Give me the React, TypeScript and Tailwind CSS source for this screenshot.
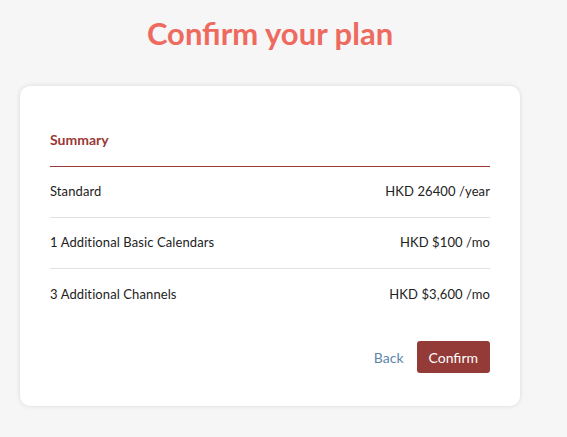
const rows = [
  { label: "Standard", price: "HKD 26400 /year" },
  { label: "1 Additional Basic Calendars", price: "HKD $100 /mo" },
  { label: "3 Additional Channels", price: "HKD $3,600 /mo" },
];

export default function App() {
  return (
    <div className="min-h-[437px] bg-[#f6f6f6] pl-[20px] pt-[13px] font-['Lato',sans-serif]">
      <div className="w-[500px]">
        <h1 className="text-center text-[31px] font-bold leading-[41px] text-[#ee6a5f]">Confirm your plan</h1>

        <div className="mt-[32px] rounded-[10px] bg-white px-[30px] pb-[33px] pt-[44px] shadow-[0_0_5px_rgba(0,0,0,0.12)]">
          <div className="border-b border-[#9a3a36] pb-[16px]">
            <h2 className="text-[14px] font-bold leading-[20px] text-[#9a3a36]">Summary</h2>
          </div>

          <div>
            {rows.map((row, i) => (
              <div
                key={row.label}
                className={`flex h-[51px] items-center justify-between text-[13px] tracking-[0.1px] text-[#222] ${
                  i < rows.length - 1 ? "border-b border-[#e2e2e2]" : ""
                }`}
              >
                <span>{row.label}</span>
                <span>{row.price}</span>
              </div>
            ))}
          </div>

          <div className="mt-[21px] flex items-center justify-end gap-[13px]">
            <button className="text-[14px] text-[#5b86aa]">Back</button>
            <button className="h-[32px] rounded-[3px] bg-[#943a37] px-[12px] text-[14px] text-white">Confirm</button>
          </div>
        </div>
      </div>
    </div>
  );
}
